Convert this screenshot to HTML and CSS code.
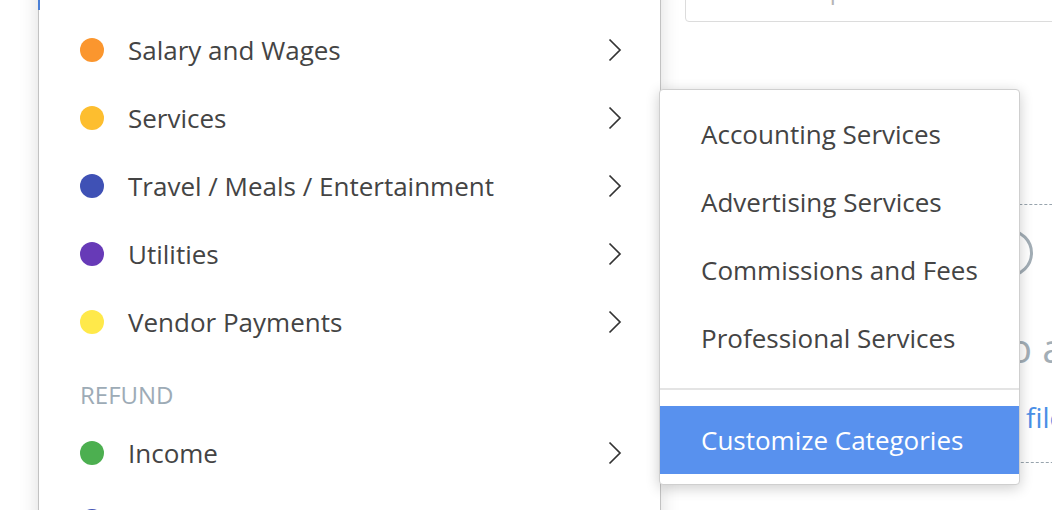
FILE: index.html
```html
<!DOCTYPE html>
<html lang="en">
<head>
<meta charset="utf-8">
<title>Category menu</title>
<link rel="stylesheet" href="styles.css">
</head>
<body>
<div class="page">
  <div class="fields">
    <div class="select-field"></div>
    <div class="input-field"><span class="input-text">Description</span></div>
  </div>
  <div class="dropzone">
    <svg class="drop-icon" width="48" height="48" viewBox="0 0 48 48"><circle cx="24" cy="24" r="22.5" fill="none" stroke="#a3aeb6" stroke-width="3"/></svg>
    <div class="drop-title">Drag and drop files to attach</div>
    <div class="drop-link">or browse files</div>
  </div>
</div>

<div class="menu">
  <span class="focus-mark"></span>
  <ul class="menu-list">
    <li class="menu-item"><span class="dot c-orange"></span><span class="label">Salary and Wages</span><svg class="chev" width="14" height="24" viewBox="0 0 14 24"><path d="M1.5 1.5 L12 12 L1.5 22.5" fill="none" stroke="#333" stroke-width="1.7"/></svg></li>
    <li class="menu-item"><span class="dot c-amber"></span><span class="label">Services</span><svg class="chev" width="14" height="24" viewBox="0 0 14 24"><path d="M1.5 1.5 L12 12 L1.5 22.5" fill="none" stroke="#333" stroke-width="1.7"/></svg></li>
    <li class="menu-item"><span class="dot c-indigo"></span><span class="label">Travel / Meals / Entertainment</span><svg class="chev" width="14" height="24" viewBox="0 0 14 24"><path d="M1.5 1.5 L12 12 L1.5 22.5" fill="none" stroke="#333" stroke-width="1.7"/></svg></li>
    <li class="menu-item"><span class="dot c-purple"></span><span class="label">Utilities</span><svg class="chev" width="14" height="24" viewBox="0 0 14 24"><path d="M1.5 1.5 L12 12 L1.5 22.5" fill="none" stroke="#333" stroke-width="1.7"/></svg></li>
    <li class="menu-item"><span class="dot c-yellow"></span><span class="label">Vendor Payments</span><svg class="chev" width="14" height="24" viewBox="0 0 14 24"><path d="M1.5 1.5 L12 12 L1.5 22.5" fill="none" stroke="#333" stroke-width="1.7"/></svg></li>
    <li class="menu-heading">REFUND</li>
    <li class="menu-item"><span class="dot c-green"></span><span class="label">Income</span><svg class="chev" width="14" height="24" viewBox="0 0 14 24"><path d="M1.5 1.5 L12 12 L1.5 22.5" fill="none" stroke="#333" stroke-width="1.7"/></svg></li>
    <li class="menu-item"><span class="dot c-indigo"></span><span class="label">Other</span><svg class="chev" width="14" height="24" viewBox="0 0 14 24"><path d="M1.5 1.5 L12 12 L1.5 22.5" fill="none" stroke="#333" stroke-width="1.7"/></svg></li>
  </ul>
</div>

<div class="submenu">
  <ul class="sub-list">
    <li class="sub-item">Accounting Services</li>
    <li class="sub-item">Advertising Services</li>
    <li class="sub-item">Commissions and Fees</li>
    <li class="sub-item">Professional Services</li>
  </ul>
  <div class="sub-divider"></div>
  <div class="sub-item sub-action">Customize Categories</div>
</div>
</body>
</html>
```

FILE: styles.css
```css
html, body {
  margin: 0;
  padding: 0;
  background: #ffffff;
  overflow: hidden;
  width: 1052px;
  height: 510px;
}

body {
  position: relative;
  font-family: "Open Sans", "Liberation Sans", sans-serif;
  color: #444444;
}

ul {
  list-style: none;
  margin: 0;
  padding: 0;
}

/* ---------- background page ---------- */
.page {
  margin-top: -40px;
  padding-left: 38px;
}

.fields {
  display: grid;
  grid-template-columns: 622px 520px;
  column-gap: 25px;
}

.select-field {
  height: 62px;
}

.input-field {
  box-sizing: border-box;
  height: 62px;
  border: 1px solid #dcdcdc;
  border-radius: 4px;
  padding: 15px 0 0 74px;
}

.input-text {
  font-size: 24px;
  line-height: 28px;
  color: #b5b5b5;
}

.dropzone {
  box-sizing: border-box;
  margin-top: 182px;
  width: 1200px;
  height: 259px;
  border: 1px dashed #98a4ad;
  border-radius: 2px;
  display: flex;
  flex-direction: column;
  align-items: flex-start;
  padding-top: 24px;
}

.drop-icon {
  display: block;
  margin-left: 946px;
}

.drop-title {
  margin-top: 47px;
  margin-left: 588px;
  font-size: 40px;
  line-height: 48px;
  color: #a3aeb6;
  white-space: nowrap;
}

.drop-link {
  margin-top: 28px;
  margin-left: 848px;
  font-size: 28px;
  line-height: 34px;
  color: #4a8fe6;
  white-space: nowrap;
}

/* ---------- main dropdown menu ---------- */
.menu {
  position: absolute;
  left: 38px;
  top: -20px;
  box-sizing: border-box;
  width: 623px;
  height: 600px;
  background: #ffffff;
  border: 1px solid #c2c2c2;
  box-shadow: 0 0 18px rgba(0, 0, 0, 0.14);
  padding-top: 35px;
  z-index: 2;
}

.focus-mark {
  position: absolute;
  left: -1px;
  top: 0;
  width: 2px;
  height: 29px;
  background: #4a7fd6;
}

.menu-item {
  display: flex;
  align-items: center;
  height: 68px;
  padding: 0 38px 0 41px;
  font-size: 26px;
  color: #444444;
}

.dot {
  flex: none;
  width: 24px;
  height: 24px;
  border-radius: 50%;
  margin-right: 24px;
}

.c-orange { background: #fb962e; }
.c-amber { background: #fdbe2f; }
.c-indigo { background: #3f51b5; }
.c-purple { background: #673ab7; }
.c-yellow { background: #ffe94a; }
.c-green { background: #4caf50; }

.label {
  flex: 1;
  white-space: nowrap;
}

.chev {
  flex: none;
  display: block;
}

.menu-heading {
  padding: 27px 0 12px 41px;
  font-size: 24px;
  line-height: 24px;
  color: #9dabb6;
}

/* ---------- submenu ---------- */
.submenu {
  position: absolute;
  left: 659px;
  top: 89px;
  box-sizing: border-box;
  width: 361px;
  background: #ffffff;
  border: 1px solid #cfcfcf;
  border-radius: 4px;
  box-shadow: 0 3px 14px rgba(0, 0, 0, 0.2);
  padding: 10px 0 10px;
  z-index: 3;
}

.sub-item {
  display: flex;
  align-items: center;
  height: 68px;
  padding-left: 41px;
  font-size: 26px;
  color: #444444;
  white-space: nowrap;
}

.sub-divider {
  height: 2px;
  background: #e4e4e4;
  margin: 16px 0 16px;
}

.sub-action {
  background: #5891ee;
  color: #ffffff;
}
```
